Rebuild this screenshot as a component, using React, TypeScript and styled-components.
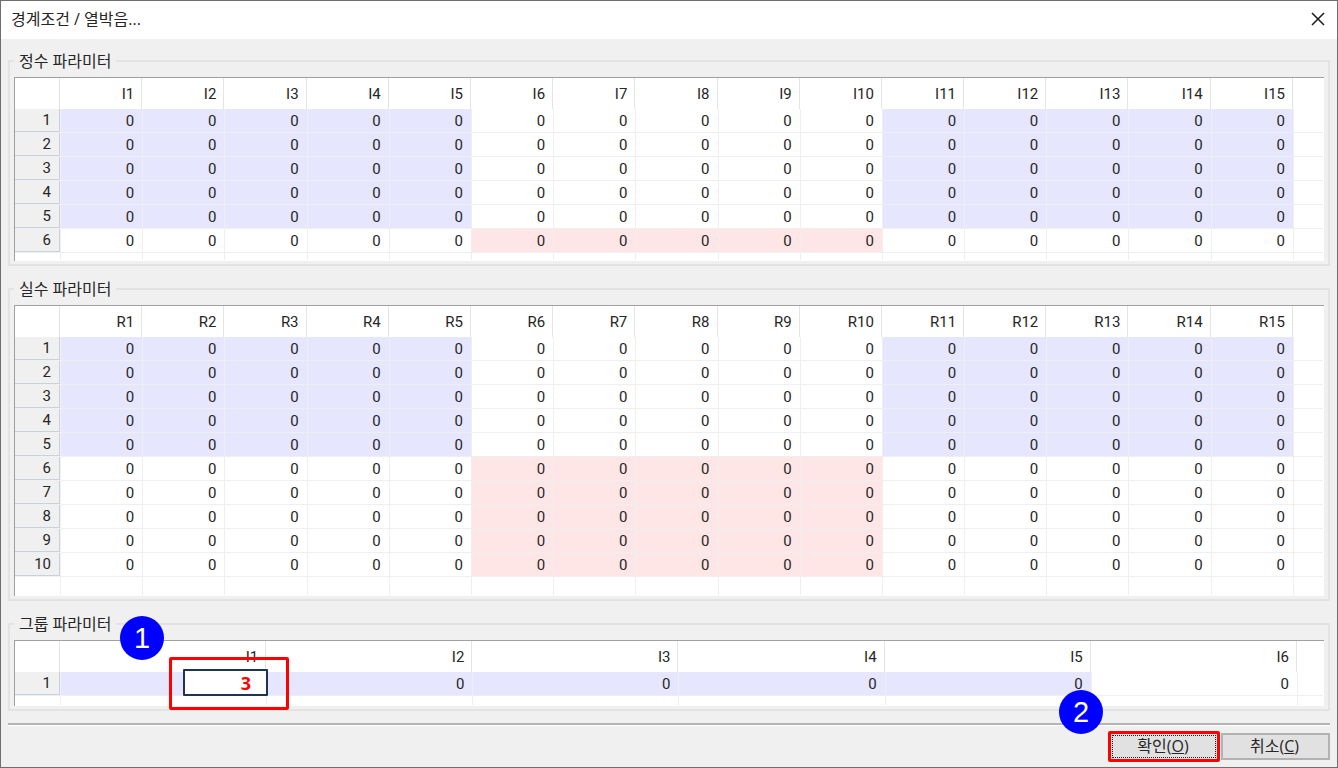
import React from 'react';
import styled, { createGlobalStyle, css } from 'styled-components';

const GlobalStyle = createGlobalStyle`
  *, *::before, *::after { box-sizing: border-box; }
  body {
    margin: 0;
    background: #f0f0f0;
    color: #262626;
    font: 16px/22px "Open Sans", "Noto Sans CJK KR", sans-serif;
  }
`;

const Dialog = styled.main`
  display: flex;
  flex-direction: column;
  min-height: 100vh;
  border: 1px solid #6e6e6e;
  background: #f0f0f0;
`;

const TitleBar = styled.header`
  display: flex;
  align-items: center;
  justify-content: space-between;
  height: 38px;
  padding: 0 10px 2px;
  background: #fff;
`;

const Title = styled.h1`
  margin: 0;
  font-size: 16px;
  font-weight: 400;
`;

const CloseButton = styled.button`
  display: flex;
  padding: 2px;
  border: 0;
  background: none;
  color: #1a1a1a;
`;

const Content = styled.form`
  display: flex;
  flex: 1;
  flex-direction: column;
  gap: 12px;
  padding: 11px 7px 0;
`;

const Group = styled.fieldset`
  min-width: 0;
  margin: 0;
  padding: 5px 4px 3px;
  border: 2px solid #e3e3e3;
`;

const Legend = styled.legend`
  height: 22px;
  padding: 0 5px;
`;

const SheetFrame = styled.div`
  padding: 0 1px 1px 0;
  border-top: 1px solid #a0a0a0;
  border-left: 1px solid #a0a0a0;
  background: #fff;
`;

const Sheet = styled.table`
  width: 100%;
  table-layout: fixed;
  border-spacing: 0;
  font-family: Roboto, sans-serif;
  font-size: 15px;
  line-height: 20px;
  text-align: right;
`;

const IndexColumn = styled.col`
  width: 46px;
`;

const SpareColumn = styled.col<{ $width: number }>`
  width: ${(p) => p.$width}px;
`;

const HeadCell = styled.th<{ $last?: boolean }>`
  height: 31px;
  padding: 0 9px 0 0;
  box-shadow: ${(p) => (p.$last ? 'none' : 'inset -1px 0 #fff, inset -2px 0 #e4e4e4')};
  font-weight: 400;
`;

const IndexCell = styled.th`
  height: 24px;
  padding: 0 9px 2px 0;
  border-right: 1px solid #f0f0f0;
  border-bottom: 1px solid #f0f0f0;
  background: #f0f0f0;
  box-shadow: inset -1px -1px #c6d2de;
  font-weight: 400;
`;

type Tone = 'plain' | 'blue' | 'pink';

const toneColor: Record<Tone, string> = {
  plain: '#ffffff',
  blue: '#e6e6ff',
  pink: '#ffe6e6',
};

const Cell = styled.td<{ $tone?: Tone }>`
  position: relative;
  height: 24px;
  padding: 0 8px 0 0;
  border-right: 1px solid #efefef;
  border-bottom: 1px solid #efefef;
  background: ${(p) => toneColor[p.$tone ?? 'plain']};
  background-clip: padding-box;
`;

const SpareCell = styled.td`
  padding: 0;
  border-bottom: 1px solid #efefef;
`;

const TailCell = styled.td<{ $height: number }>`
  height: ${(p) => p.$height}px;
  padding: 0;
  border-right: 1px solid #efefef;

  &:last-child {
    border-right: 0;
  }
`;

const highlight = css`
  border: 3px solid #ff0000;
  border-radius: 2px;
`;

const CellHighlight = styled.div`
  ${highlight}
  position: absolute;
  z-index: 1;
  top: -15px;
  right: -23px;
  display: flex;
  align-items: center;
  justify-content: center;
  width: 120px;
  height: 53px;
  padding: 0 7px 2px 0;
`;

const ValueInput = styled.input`
  width: 85px;
  height: 27px;
  padding: 0 15px 0 0;
  border: 2px solid #1f3450;
  border-radius: 1px;
  outline: 0;
  background: #fff;
  color: #ff0000;
  font: 700 18px/22px "Open Sans", sans-serif;
  text-align: right;
`;

const Badge = styled.span`
  position: absolute;
  top: -44px;
  left: -52px;
  width: 44px;
  height: 44px;
  border-radius: 50%;
  background: #0000ff;
  color: #fff;
  font: 29px/44px "Liberation Sans", sans-serif;
  text-align: center;
`;

const Footer = styled.footer`
  display: flex;
  align-items: center;
  justify-content: flex-end;
  gap: 1px;
  padding: 6px 0 5px;
  border-top: 2px solid #b4b4b4;
  box-shadow: inset 0 1px #fff;
`;

const ButtonHighlight = styled.div`
  ${highlight}
  position: relative;
  width: 112px;
  height: 31px;
`;

const DialogButton = styled.button<{ $focused?: boolean }>`
  width: ${(p) => (p.$focused ? '100%' : '109px')};
  height: ${(p) => (p.$focused ? '100%' : '27px')};
  padding: 0 2px 2px 0;
  border: ${(p) => (p.$focused ? '1px solid #e1e1e1' : '2px solid #b2b2b2')};
  outline: ${(p) => (p.$focused ? '1px dotted #222' : 'none')};
  outline-offset: -2px;
  background: #e1e1e1;
  color: #262626;
  font: inherit;
  line-height: 20px;
`;

interface GridProps {
  label: string;
  prefix: string;
  columns: number;
  rows: number;
  spareWidth: number;
  tailHeight: number;
  tone: (row: number, column: number) => Tone;
  renderCell?: (row: number, column: number) => React.ReactNode;
}

const range = (count: number) => Array.from({ length: count }, (_, i) => i + 1);

function ParameterGroup({
  label,
  prefix,
  columns,
  rows,
  spareWidth,
  tailHeight,
  tone,
  renderCell = () => 0,
}: GridProps) {
  return (
    <Group>
      <Legend>{label}</Legend>
      <SheetFrame>
        <Sheet aria-label={label}>
          <colgroup>
            <IndexColumn />
            {range(columns).map((c) => (
              <col key={c} />
            ))}
            <SpareColumn $width={spareWidth} />
          </colgroup>
          <thead>
            <tr>
              <HeadCell />
              {range(columns).map((c) => (
                <HeadCell key={c} scope="col">
                  {prefix + c}
                </HeadCell>
              ))}
              <HeadCell $last />
            </tr>
          </thead>
          <tbody>
            {range(rows).map((r) => (
              <tr key={r}>
                <IndexCell scope="row">{r}</IndexCell>
                {range(columns).map((c) => (
                  <Cell key={c} $tone={tone(r, c)}>
                    {renderCell(r, c)}
                  </Cell>
                ))}
                <SpareCell />
              </tr>
            ))}
            <tr>
              {range(columns + 2).map((c) => (
                <TailCell key={c} $height={tailHeight} />
              ))}
            </tr>
          </tbody>
        </Sheet>
      </SheetFrame>
    </Group>
  );
}

// Blocks of five rows by five columns alternate between tinted and plain.
const blockTone = (row: number, column: number): Tone => {
  const middle = column > 5 && column <= 10;
  if (row <= 5) return middle ? 'plain' : 'blue';
  return middle ? 'pink' : 'plain';
};

export default function App() {
  return (
    <>
      <GlobalStyle />
      <Dialog>
        <TitleBar>
          <Title>경계조건 / 열박음...</Title>
          <CloseButton type="button" aria-label="닫기">
            <svg width="14" height="14" viewBox="0 0 14 14" fill="none" stroke="currentColor" strokeWidth="1.5">
              <path d="M1 1 13 13M13 1 1 13" />
            </svg>
          </CloseButton>
        </TitleBar>
        <Content onSubmit={(e) => e.preventDefault()}>
          <ParameterGroup
            label="정수 파라미터"
            prefix="I"
            columns={15}
            rows={6}
            spareWidth={29}
            tailHeight={7}
            tone={blockTone}
          />
          <ParameterGroup
            label="실수 파라미터"
            prefix="R"
            columns={15}
            rows={10}
            spareWidth={29}
            tailHeight={18}
            tone={blockTone}
          />
          <ParameterGroup
            label="그룹 파라미터"
            prefix="I"
            columns={6}
            rows={1}
            spareWidth={25}
            tailHeight={9}
            tone={(_, c) => (c <= 5 ? 'blue' : 'plain')}
            renderCell={(_, c) =>
              c === 1 ? (
                <CellHighlight>
                  <ValueInput aria-label="I1" defaultValue="3" />
                  <Badge>1</Badge>
                </CellHighlight>
              ) : (
                0
              )
            }
          />
          <Footer>
            <ButtonHighlight>
              <DialogButton type="submit" $focused>
                확인(<u>O</u>)
              </DialogButton>
              <Badge>2</Badge>
            </ButtonHighlight>
            <DialogButton type="button">
              취소(<u>C</u>)
            </DialogButton>
          </Footer>
        </Content>
      </Dialog>
    </>
  );
}
